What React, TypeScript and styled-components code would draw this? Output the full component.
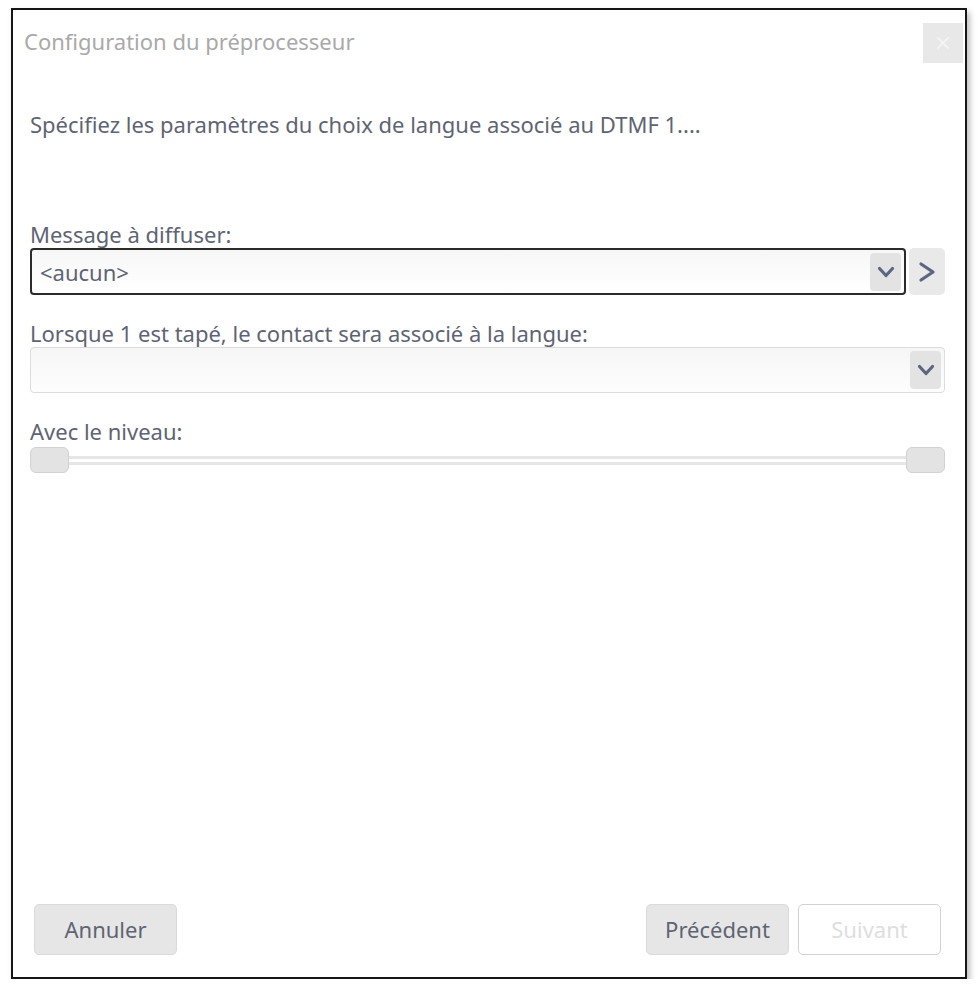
import React from 'react';
import styled, { createGlobalStyle } from 'styled-components';

const GlobalStyle = createGlobalStyle`
  html, body {
    margin: 0;
    padding: 0;
    background: #ffffff;
  }
  body {
    font-family: 'Noto Sans', 'Open Sans', sans-serif;
  }
`;

const Window = styled.div`
  box-sizing: border-box;
  margin: 8px 0 0 11px;
  width: 956px;
  height: 971px;
  border: 2px solid #161616;
  background: #ffffff;
  box-shadow: 3px 4px 6px rgba(0, 0, 0, 0.25);
  display: flex;
  flex-direction: column;
`;

const TitleBar = styled.div`
  display: flex;
  justify-content: space-between;
  align-items: flex-start;
  padding: 13px 2px 0 11px;
  height: 54px;
`;

const Title = styled.div`
  font-size: 22px;
  line-height: 30px;
  color: #a9a9a9;
  padding-top: 3px;
`;

const CloseButton = styled.div`
  width: 40px;
  height: 40px;
  background: #e8e8e8;
  display: flex;
  align-items: center;
  justify-content: center;
`;

const Body = styled.div`
  flex: 1;
  display: flex;
  flex-direction: column;
  padding: 0 20px 0 17px;
`;

const Intro = styled.div`
  font-size: 22px;
  line-height: 30px;
  color: #5e6473;
  margin-top: 32px;
  margin-bottom: 82px;
`;

const Label = styled.div`
  font-size: 22px;
  color: #5e6473;
  line-height: 26px;
  margin-bottom: 1px;
`;

const FieldRow = styled.div<{ after?: number }>`
  display: flex;
  align-items: center;
  gap: 3px;
  margin-bottom: ${(p) => p.after ?? 24}px;
`;

const Combo = styled.div<{ focused?: boolean }>`
  box-sizing: border-box;
  flex: 1;
  height: ${(p) => (p.focused ? '47px' : '46px')};
  border: ${(p) => (p.focused ? '2px solid #2b2b2b' : '1px solid #dcdcdc')};
  border-radius: 4px;
  background: ${(p) =>
    p.focused ? 'linear-gradient(#f7f7f7, #ffffff)' : 'linear-gradient(#f6f6f6, #fdfdfd)'};
  display: flex;
  align-items: center;
  justify-content: space-between;
  padding: 0 3px 0 8px;
`;

const ComboText = styled.span`
  font-size: 22px;
  color: #5e6473;
`;

const ChevronBox = styled.div`
  width: 31px;
  height: 38px;
  border-radius: 4px;
  background: #e3e3e3;
  display: flex;
  align-items: center;
  justify-content: center;
`;

const SideButton = styled.div`
  width: 36px;
  height: 47px;
  border-radius: 5px;
  background: #e9e9e9;
  display: flex;
  align-items: center;
  justify-content: center;
`;

const Slider = styled.div`
  display: flex;
  align-items: center;
  height: 28px;
  margin-top: 1px;
`;

const Thumb = styled.div`
  box-sizing: border-box;
  width: 39px;
  height: 26px;
  border-radius: 6px;
  background: #e3e3e3;
  border: 1px solid #d2d2d2;
`;

const Track = styled.div`
  box-sizing: border-box;
  flex: 1;
  height: 9px;
  border-top: 3px solid #e6e6e6;
  border-bottom: 3px solid #e6e6e6;
  background: #ffffff;
`;

const Spacer = styled.div`
  flex: 1;
`;

const Footer = styled.div`
  display: flex;
  align-items: center;
  gap: 9px;
  padding: 0 24px 22px 21px;
`;

const DialogButton = styled.button<{ disabled?: boolean }>`
  box-sizing: border-box;
  width: 143px;
  height: 51px;
  border-radius: 5px;
  font-family: 'Noto Sans', 'Open Sans', sans-serif;
  font-size: 22px;
  border: 1px solid ${(p) => (p.disabled ? '#d2d2d2' : '#dadada')};
  background: ${(p) => (p.disabled ? '#ffffff' : '#e6e6e6')};
  color: ${(p) => (p.disabled ? '#dedede' : '#5e6473')};
  padding: 0 0 2px;
`;

const Chevron: React.FC = () => (
  <svg width="18" height="12" viewBox="0 0 18 12">
    <path d="M2.5 2.5 L9 9.5 L15.5 2.5" fill="none" stroke="#5b6680" strokeWidth="3.2" strokeLinecap="round" strokeLinejoin="round" />
  </svg>
);

const RightArrow: React.FC = () => (
  <svg width="18" height="22" viewBox="0 0 18 22">
    <path d="M3 3 L15 11 L3 19" fill="none" stroke="#5b6680" strokeWidth="3.2" strokeLinecap="round" strokeLinejoin="round" />
  </svg>
);

const CloseIcon: React.FC = () => (
  <svg width="12" height="12" viewBox="0 0 12 12">
    <path d="M1 1 L11 11 M11 1 L1 11" stroke="#f7f7f7" strokeWidth="1.6" strokeLinecap="round" />
  </svg>
);

const App: React.FC = () => (
  <>
    <GlobalStyle />
    <Window>
      <TitleBar>
        <Title>Configuration du préprocesseur</Title>
        <CloseButton>
          <CloseIcon />
        </CloseButton>
      </TitleBar>
      <Body>
        <Intro>Spécifiez les paramètres du choix de langue associé au DTMF 1....</Intro>
        <Label>Message à diffuser:</Label>
        <FieldRow after={25}>
          <Combo focused>
            <ComboText>&lt;aucun&gt;</ComboText>
            <ChevronBox>
              <Chevron />
            </ChevronBox>
          </Combo>
          <SideButton>
            <RightArrow />
          </SideButton>
        </FieldRow>
        <Label>Lorsque 1 est tapé, le contact sera associé à la langue:</Label>
        <FieldRow after={25}>
          <Combo>
            <ComboText />
            <ChevronBox>
              <Chevron />
            </ChevronBox>
          </Combo>
        </FieldRow>
        <Label>Avec le niveau:</Label>
        <Slider>
          <Thumb />
          <Track />
          <Thumb />
        </Slider>
        <Spacer />
      </Body>
      <Footer>
        <DialogButton>Annuler</DialogButton>
        <Spacer />
        <DialogButton>Précédent</DialogButton>
        <DialogButton disabled>Suivant</DialogButton>
      </Footer>
    </Window>
  </>
);

export default App;
